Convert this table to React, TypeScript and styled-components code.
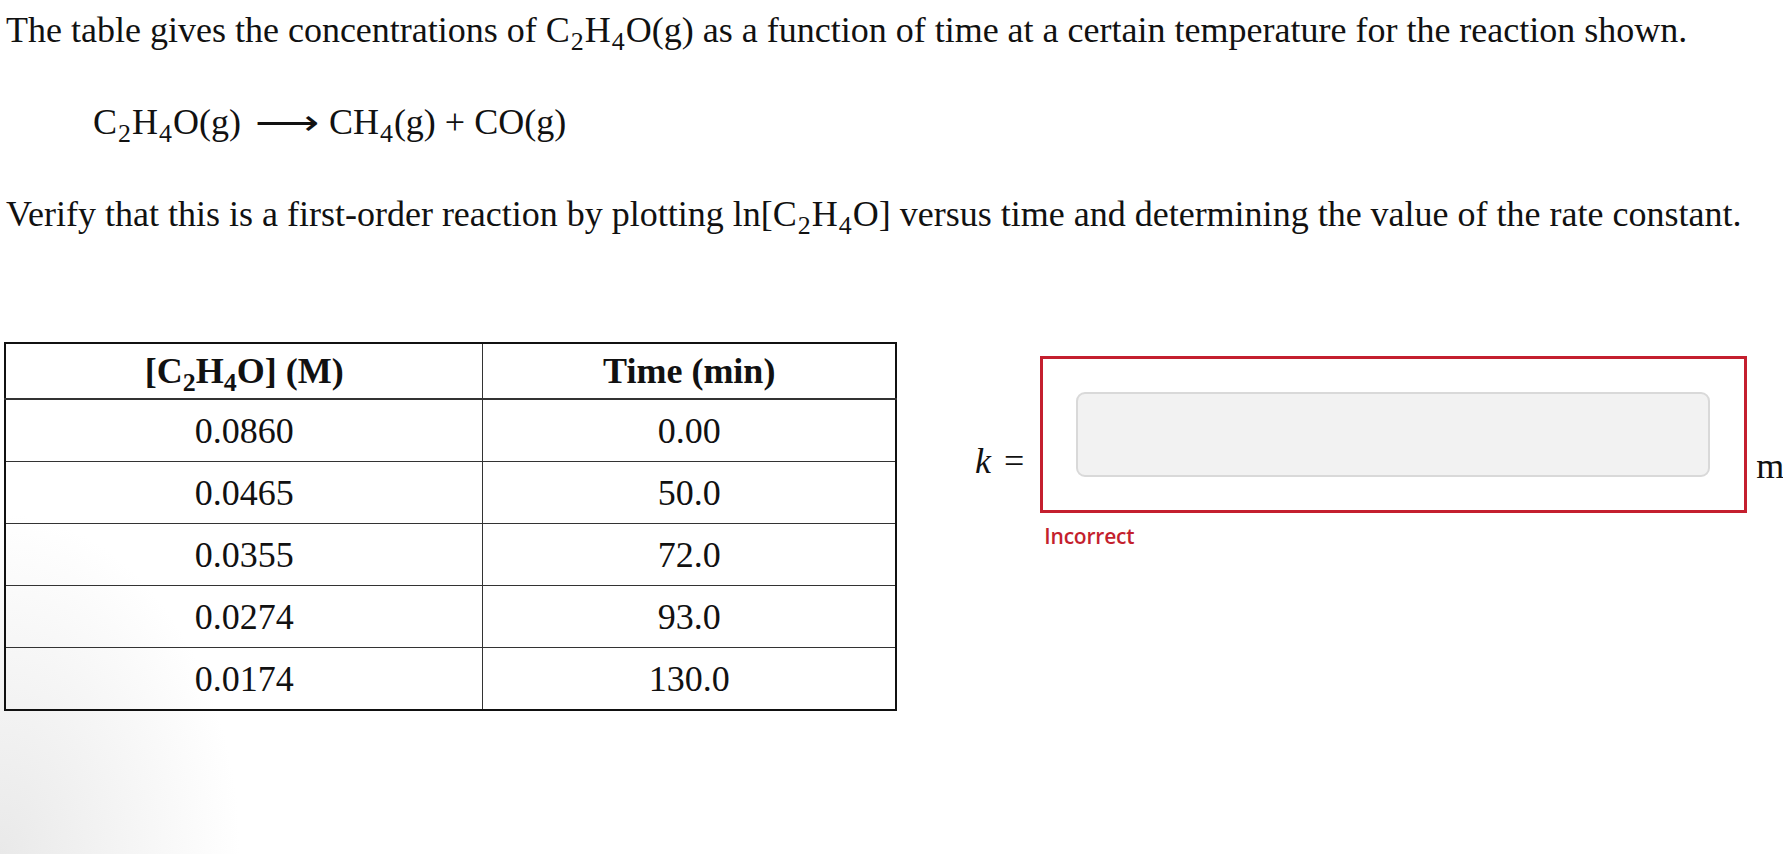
import styled, { createGlobalStyle } from "styled-components";

const GlobalStyle = createGlobalStyle`
  html, body {
    margin: 0;
    padding: 0;
    overflow: hidden;
  }
  body {
    width: 1783px;
    height: 854px;
    font-family: "Liberation Serif", "Times New Roman", serif;
    color: #111;
    background: radial-gradient(ellipse 240px 340px at 0% 100%, #e9e9e9 0%, #ffffff 100%);
  }
`;

const Page = styled.div`
  width: 1783px;
  height: 854px;
  display: flex;
  flex-direction: column;
  padding: 10px 0 0 6px;
  box-sizing: border-box;
`;

const Text = styled.p`
  margin: 0;
  font-size: 36px;
  line-height: 40px;
  white-space: nowrap;
`;

const Equation = styled(Text)`
  margin: 52px 0 0 87px;
`;

const Question = styled(Text)`
  margin-top: 51px;
`;

const Sub = styled.sub<{ $tight?: boolean }>`
  font-size: 0.72em;
  vertical-align: -0.3em;
  line-height: 0;
  margin: ${(p) => (p.$tight ? "0" : "0 1px")};
`;

const Arrow = styled.span`
  display: inline-block;
  margin: 0 10px 0 14px;
  font-size: 32px;
  transform: scaleX(1.4);
  transform-origin: center;
`;

const Section = styled.div`
  display: flex;
  align-items: flex-start;
  margin-top: 108px;
  margin-left: -2px;
`;

const Table = styled.table`
  flex-shrink: 0;
  border-collapse: collapse;
  border: 2px solid #111;
  font-size: 36px;
  width: 893px;
`;

const HeadCell = styled.th<{ $w: number }>`
  width: ${(p) => p.$w}px;
  height: 54px;
  padding: 0;
  font-weight: bold;
  text-align: center;
  border-right: 1.5px solid #333;
  border-bottom: 2px solid #333;
`;

const Cell = styled.td`
  height: 61px;
  padding: 0;
  text-align: center;
  border-right: 1.5px solid #333;
  border-bottom: 1.5px solid #333;
`;

const Answer = styled.div`
  display: flex;
  flex-shrink: 0;
  align-items: flex-start;
  margin-left: 78px;
  margin-top: 14px;
`;

const Label = styled.span`
  font-size: 36px;
  margin-top: 84px;
  margin-right: 16px;
  white-space: nowrap;
  i {
    margin-right: 13px;
  }
`;

const FieldWrap = styled.div`
  display: flex;
  flex-direction: column;
`;

const RedBox = styled.div`
  width: 707px;
  height: 157px;
  box-sizing: border-box;
  border: 3.5px solid #c41f2e;
  display: flex;
  align-items: center;
  padding-left: 33px;
`;

const Input = styled.div`
  width: 634px;
  height: 85px;
  box-sizing: border-box;
  background: #f2f2f2;
  border: 2.5px solid #d9d9d9;
  border-radius: 9px;
  margin-top: -1px;
`;

const Feedback = styled.span`
  font-family: "Open Sans", "Noto Sans", sans-serif;
  font-size: 21px;
  font-weight: 600;
  letter-spacing: -0.2px;
  color: #c41f2e;
  margin: 9px 0 0 4px;
`;

const Unit = styled.span`
  font-size: 36px;
  margin-top: 84px;
  margin-left: 9px;
  white-space: nowrap;
`;

const rows = [
  ["0.0860", "0.00"],
  ["0.0465", "50.0"],
  ["0.0355", "72.0"],
  ["0.0274", "93.0"],
  ["0.0174", "130.0"],
];

const C2H4O = () => (
  <>
    C<Sub>2</Sub>H<Sub>4</Sub>O
  </>
);

export default function App() {
  return (
    <Page>
      <GlobalStyle />
      <Text>
        The table gives the concentrations of <C2H4O />
        (g) as a function of time at a certain temperature for the reaction shown.
      </Text>
      <Equation>
        <C2H4O />
        (g) <Arrow>⟶</Arrow> CH<Sub>4</Sub>(g) + CO(g)
      </Equation>
      <Question>
        Verify that this is a first-order reaction by plotting ln[<C2H4O />] versus time and
        determining the value of the rate constant.
      </Question>
      <Section>
        <Table>
          <thead>
            <tr>
              <HeadCell $w={478}>
                [C<Sub $tight>2</Sub>H<Sub $tight>4</Sub>O] (M)
              </HeadCell>
              <HeadCell $w={413}>Time (min)</HeadCell>
            </tr>
          </thead>
          <tbody>
            {rows.map(([c, t]) => (
              <tr key={t}>
                <Cell>{c}</Cell>
                <Cell>{t}</Cell>
              </tr>
            ))}
          </tbody>
        </Table>
        <Answer>
          <Label>
            <i>k</i>=
          </Label>
          <FieldWrap>
            <RedBox>
              <Input />
            </RedBox>
            <Feedback>Incorrect</Feedback>
          </FieldWrap>
          <Unit>min⁻¹</Unit>
        </Answer>
      </Section>
    </Page>
  );
}
